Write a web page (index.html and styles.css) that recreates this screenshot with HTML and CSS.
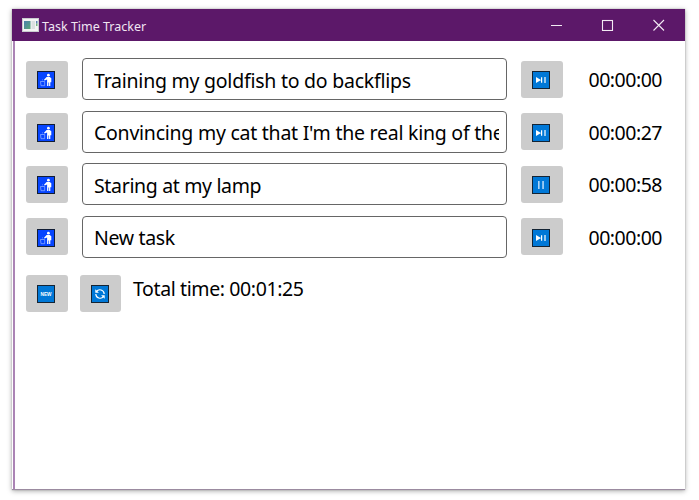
FILE: index.html
```html
<!DOCTYPE html>
<html lang="en">
<head>
<meta charset="utf-8">
<title>Task Time Tracker</title>
<link rel="stylesheet" href="styles.css">
</head>
<body>
<svg width="0" height="0" class="defs">
  <symbol id="trash" viewBox="0 0 18 18">
    <rect x=".5" y=".5" width="17" height="17" fill="#0645ff" stroke="#111d35"/>
    <circle cx="11.4" cy="4.2" r="1.4" fill="#fff"/>
    <path d="M9.6 6h3.2l1.5 1.3v4h-1V15h-1.2v-3.5h-.7V15h-1.3V8.4L7.6 9.5 7 8.7z" fill="#fff"/>
    <path d="M3.5 10.5h4.2v4.2H4zM5.5 9.3v-.8" fill="none" stroke="#9db9ff" stroke-width=".7"/>
  </symbol>
  <symbol id="play" viewBox="0 0 18 18">
    <rect x=".5" y=".5" width="17" height="17" fill="#0078d7" stroke="#142434"/>
    <path d="M4 6v6l5-3zM9 6.3h1.2v5.4H9zM12.4 6h1.2v6h-1.2z" fill="#fff"/>
  </symbol>
  <symbol id="pause" viewBox="0 0 18 18">
    <rect x=".5" y=".5" width="17" height="17" fill="#0078d7" stroke="#142434"/>
    <path d="M6.2 5h1.3v8H6.2zM10.4 5h1.3v8h-1.3z" fill="#d9edff"/>
  </symbol>
  <symbol id="new" viewBox="0 0 18 18">
    <rect x=".5" y=".5" width="17" height="17" fill="#0078d7" stroke="#142434"/>
    <text x="9" y="11" class="new-label" textLength="11" lengthAdjust="spacingAndGlyphs">NEW</text>
  </symbol>
  <symbol id="refresh" viewBox="0 0 18 18">
    <rect x=".5" y=".5" width="17" height="17" fill="#0078d7" stroke="#142434"/>
    <path d="M5.4 6.6A4.3 4.3 0 0 1 13.2 9M12.6 11.4A4.3 4.3 0 0 1 4.8 9" fill="none" stroke="#fff" stroke-width="1.2"/>
    <path d="M4.3 4.2v3.6h3.6zM13.7 13.8v-3.6h-3.6z" fill="#fff"/>
  </symbol>
</svg>
<main class="window">
  <header class="titlebar">
    <svg class="app-icon" width="17" height="14" viewBox="0 0 17 14">
      <defs><linearGradient id="g" x2="1" y2="1"><stop stop-color="#4b7fae"/><stop offset="1" stop-color="#5aa878"/></linearGradient></defs>
      <rect width="17" height="14" fill="#c9ccd0"/>
      <rect x="1" y="1" width="15" height="12" fill="#f4f4f4"/>
      <rect x="2" y="3" width="6.5" height="8" fill="url(#g)"/>
      <rect x="9.5" y="3" width="3.5" height="8" fill="#dcdfe1"/>
      <rect x="14.2" y="3" width="1.2" height="2.6" fill="#3565a5"/><rect x="14.2" y="5.6" width="1.2" height="2.4" fill="#55a463"/>
    </svg>
    <h1 class="title">Task Time Tracker</h1>
    <svg class="controls" width="114" height="12" viewBox="0 0 114 12" fill="none" stroke="#f2eaf3" stroke-width="1.1">
      <path d="M0 6.5h11M102.5 1l10.5 10.5M113 1l-10.5 10.5"/><rect x="51.5" y="1.5" width="10" height="10"/>
    </svg>
  </header>
  <section class="content">
    <div class="tasks">
      <div class="task"><button class="btn"><svg class="icon"><use href="#trash"/></svg></button><div class="field"><span class="name goldfish">Training my goldfish to do backflips</span></div><button class="btn"><svg class="icon"><use href="#play"/></svg></button><span class="time">00:00:00</span></div>
      <div class="task"><button class="btn"><svg class="icon"><use href="#trash"/></svg></button><div class="field"><span class="name cat">Convincing my cat that I'm the real king of the</span></div><button class="btn"><svg class="icon"><use href="#play"/></svg></button><span class="time">00:00:27</span></div>
      <div class="task"><button class="btn"><svg class="icon"><use href="#trash"/></svg></button><div class="field"><span class="name">Staring at my lamp</span></div><button class="btn"><svg class="icon"><use href="#pause"/></svg></button><span class="time">00:00:58</span></div>
      <div class="task"><button class="btn"><svg class="icon"><use href="#trash"/></svg></button><div class="field"><span class="name">New task</span></div><button class="btn"><svg class="icon"><use href="#play"/></svg></button><span class="time">00:00:00</span></div>
    </div>
    <footer class="summary"><button class="btn"><svg class="icon"><use href="#new"/></svg></button><button class="btn"><svg class="icon"><use href="#refresh"/></svg></button><span class="total">Total time: 00:01:25</span></footer>
  </section>
</main>
</body>
</html>
```
FILE: styles.css
```css
* { box-sizing: border-box; }
body { margin: 0; height: 500px; padding: 9px 14px 0 12px; background: #fff; overflow: hidden; font-family: "Noto Sans", "Open Sans", sans-serif; color: #000; }
.defs { display: block; }
.window { width: 673px; height: 481px; background: #fff; box-shadow: 0 0 1px rgba(0,0,0,.3), 0 1px 5px rgba(0,0,0,.35); border-bottom: 1px solid #9b8ba0; }
.titlebar { height: 32px; background: #5c1869; display: flex; align-items: center; padding: 0 20px 0 10px; }
.title { margin: 3px 0 0 3px; font-size: 12.5px; font-weight: 400; color: #f0e6f2; line-height: 18px; white-space: nowrap; }
.controls { margin-left: auto; }
.content { height: 448px; margin-left: 1px; border-left: 2px solid #ab84b5; padding: 17px 0 0 11px; }
.tasks { display: grid; gap: 10.5px; }
.task { display: grid; grid-template-columns: 42px 425px 42px 90px; column-gap: 14px; height: 42px; align-items: center; }
.btn { width: 41.5px; height: 37px; border: 0; border-radius: 3px; background: #ccc; padding: 0; display: flex; align-items: center; justify-content: center; }
.icon { width: 18px; height: 18px; margin-left: -1px; margin-top: 2px; display: block; }
.field { height: 42px; border: 1px solid #666; border-radius: 4px; padding: 0 7px 0 11px; display: flex; align-items: center; }
.name { width: 100%; overflow: hidden; white-space: nowrap; font-size: 19.5px; line-height: 32px; letter-spacing: -.34px; padding-top: 3px; }
.goldfish { letter-spacing: -.24px; }
.cat { letter-spacing: -.25px; }
.time { font-size: 19.5px; line-height: 30px; letter-spacing: -.48px; padding: 2px 0 0 11.5px; white-space: nowrap; }
.summary { display: flex; gap: 12px; margin-top: 17px; }
.total { margin-top: -1px; font-size: 19.5px; line-height: 30px; letter-spacing: -.39px; white-space: nowrap; }
.new-label { font: 700 4.6px "Liberation Sans", sans-serif; fill: #fff; text-anchor: middle; }
```
